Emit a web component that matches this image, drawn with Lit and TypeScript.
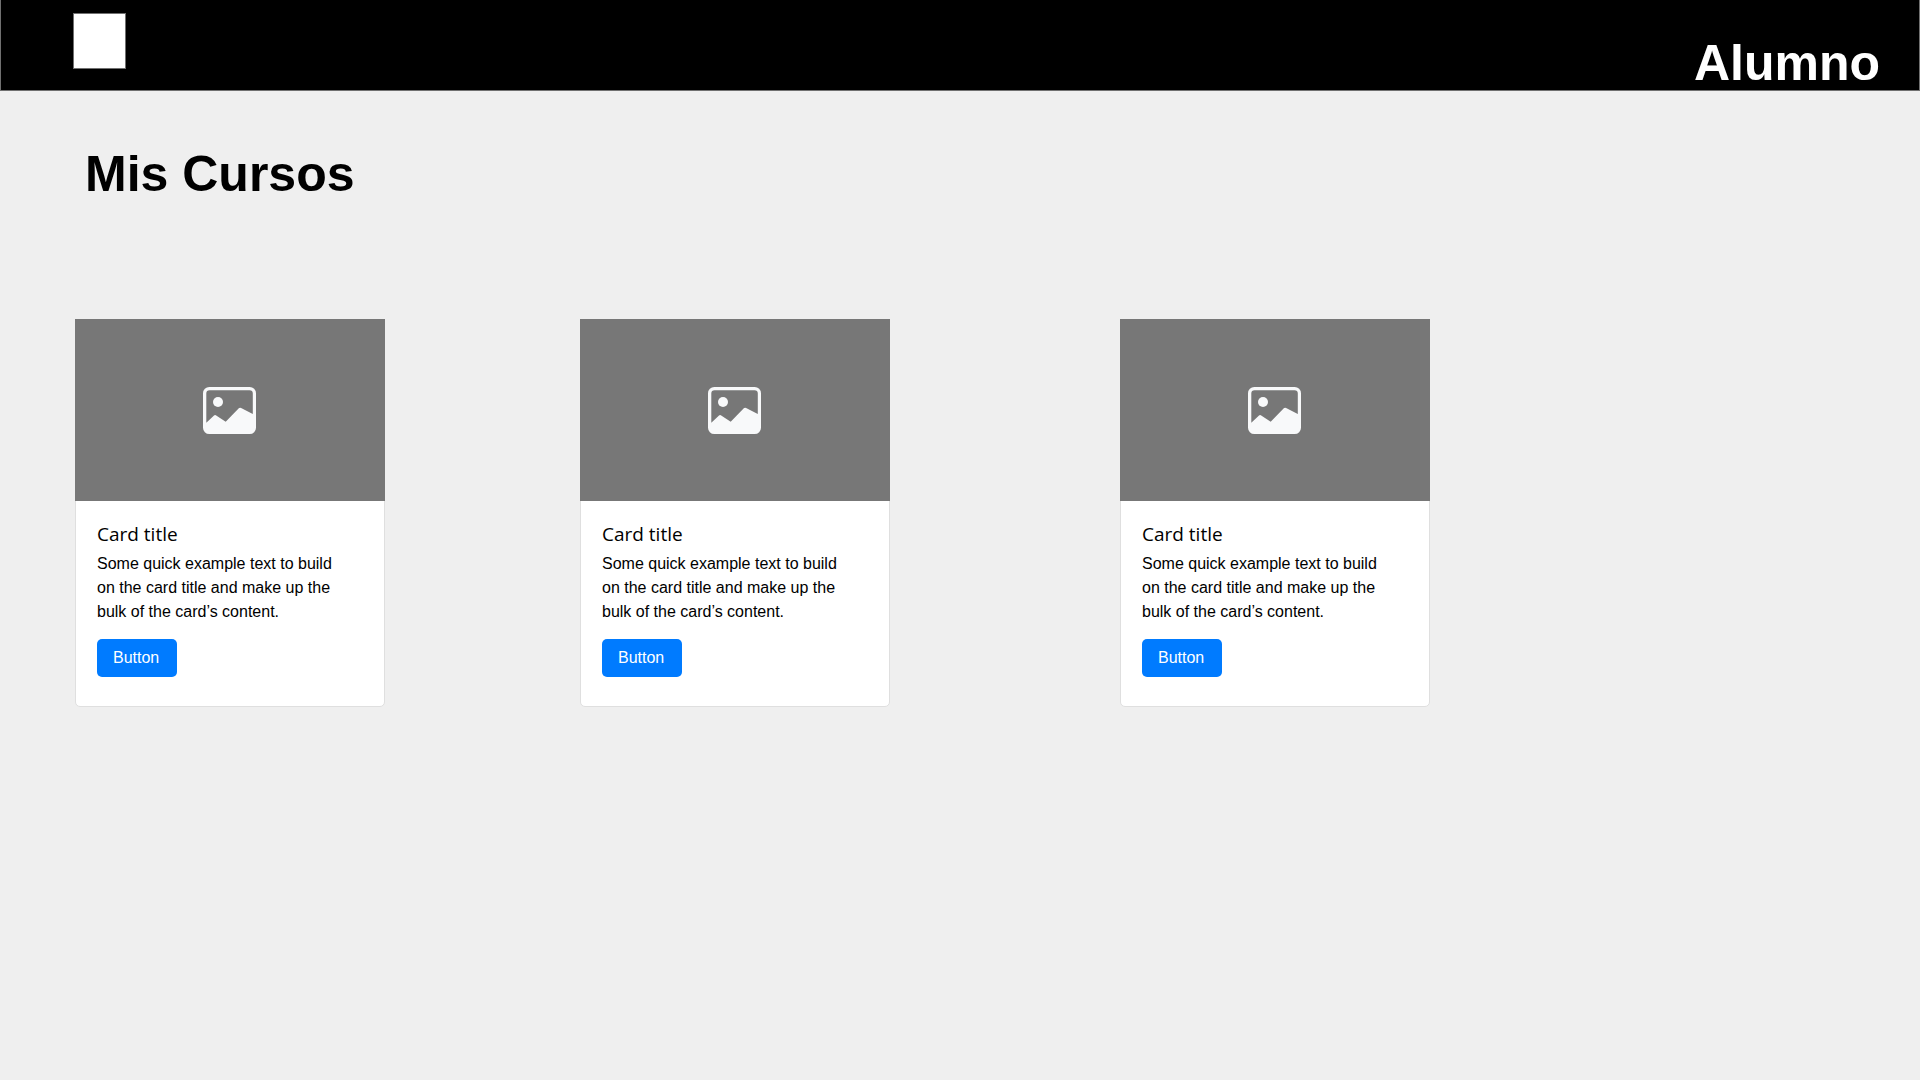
import { LitElement, html, css } from "lit";
import { customElement, property, state } from "lit/decorators.js";

interface Course {
  title: string;
  text: string;
  action: string;
}

@customElement("course-card")
class CourseCard extends LitElement {
  @property({ attribute: false }) course!: Course;

  static styles = css`
    :host {
      display: block;
      width: 310px;
      max-width: 100%;
    }
    .card {
      box-sizing: border-box;
      background: #fff;
      border: 1px solid #dfdfdf;
      border-radius: 0 0 5px 5px;
    }
    .cover {
      display: flex;
      align-items: center;
      justify-content: center;
      height: 182px;
      margin: -1px -1px 0;
      padding-right: 1px;
      background: #777;
    }
    .cover-icon {
      width: 53px;
      height: 47px;
      fill: #f8f9fa;
    }
    .body {
      padding: 21px 41px 29px 21px;
    }
    .title {
      margin: 0 0 6px;
      font: 400 19px/24px "Open Sans", sans-serif;
    }
    .text {
      margin: 0 0 15px;
      font-size: 16px;
      line-height: 24px;
    }
    .action {
      display: block;
      min-width: 80px;
      padding: 7px 16px;
      border: 0;
      border-radius: 5px;
      background: #007bff;
      color: #fff;
      font: inherit;
      line-height: 24px;
      text-align: left;
      cursor: pointer;
    }
  `;

  render() {
    return html`
      <article class="card">
        <div class="cover">
          <svg class="cover-icon" viewBox="0 0 53 47" aria-hidden="true">
            <path
              fill-rule="evenodd"
              d="M6.3 0H46.7A6.3 6.3 0 0 1 53 6.3V40.7A6.3 6.3 0 0 1 46.7 47H6.3A6.3 6.3 0 0 1 0 40.7V6.3A6.3 6.3 0 0 1 6.3 0ZM6.6 3.3A3.3 3.3 0 0 0 3.3 6.6V35.7L11 28.6Q12 27.7 13.2 28.5L22.7 34.8L35.8 21.3Q36.8 20.3 38.1 21L49.8 27.1V6.6A3.3 3.3 0 0 0 46.5 3.3Z"
            />
            <circle cx="15" cy="15" r="5" />
          </svg>
        </div>
        <div class="body">
          <h2 class="title">${this.course.title}</h2>
          <p class="text">${this.course.text}</p>
          <button class="action" type="button">${this.course.action}</button>
        </div>
      </article>
    `;
  }
}

@customElement("app-root")
class AppRoot extends LitElement {
  @state() private courses: Course[] = Array.from({ length: 3 }, () => ({
    title: "Card title",
    text: "Some quick example text to build on the card title and make up the bulk of the card’s content.",
    action: "Button",
  }));

  static styles = css`
    :host {
      display: block;
      min-height: 100vh;
      background: #efefef;
      color: #000;
      font-family: "Liberation Sans", Arial, sans-serif;
      font-size: 16px;
    }
    .bar {
      display: flex;
      align-items: flex-end;
      justify-content: space-between;
      box-sizing: border-box;
      min-height: 91px;
      padding: 13px 39px 2px 72px;
      border: 1px solid #707070;
      border-top: 0;
      background: #000;
      color: #fff;
    }
    .logo {
      box-sizing: border-box;
      align-self: flex-start;
      width: 53px;
      height: 56px;
      border: 1px solid #707070;
      background: #fff;
    }
    .role {
      font-size: 50px;
      font-weight: 700;
      line-height: 50px;
    }
    .page {
      padding: 54px 0 54px 75px;
    }
    .heading {
      margin: 0 0 116px;
      padding-left: 10px;
      font-size: 50px;
      font-weight: 700;
      line-height: 58px;
    }
    .courses {
      display: grid;
      grid-template-columns: 505fr 540fr 800fr;
      align-items: start;
    }
  `;

  render() {
    return html`
      <header class="bar">
        <div class="logo"></div>
        <span class="role">Alumno</span>
      </header>
      <main class="page">
        <h1 class="heading">Mis Cursos</h1>
        <section class="courses">
          ${this.courses.map((c) => html`<course-card .course=${c}></course-card>`)}
        </section>
      </main>
    `;
  }
}
